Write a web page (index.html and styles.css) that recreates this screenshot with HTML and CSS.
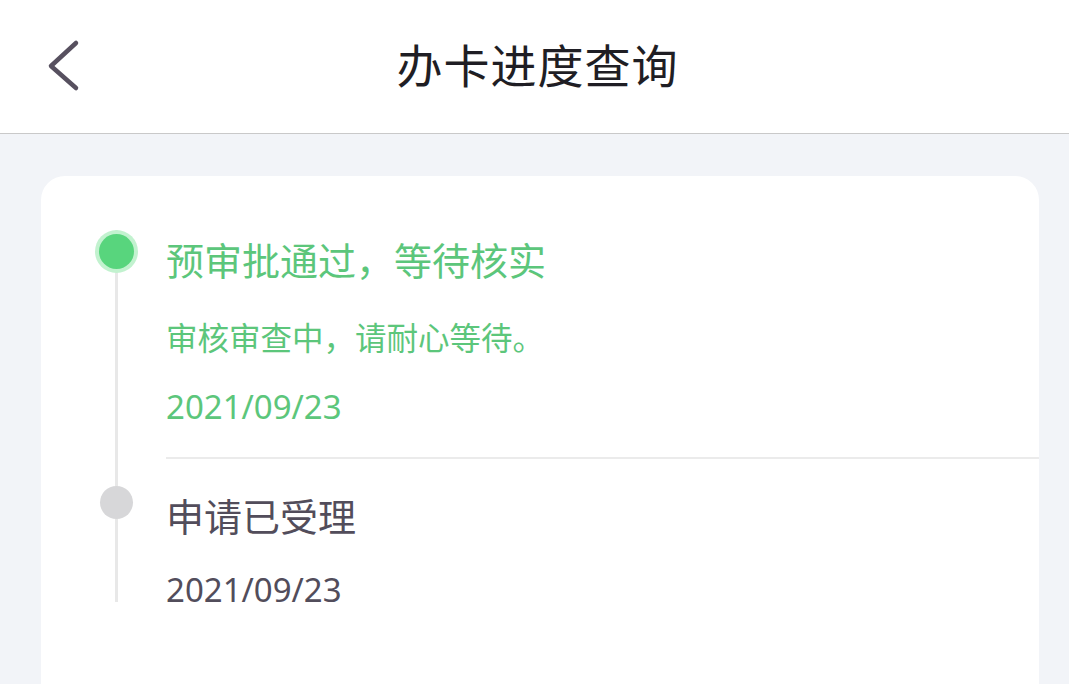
FILE: index.html
```html
<!DOCTYPE html>
<html>

	<head>
		<meta charset="UTF-8">
		<title>办卡进度查询</title>
		<link rel="stylesheet" href="styles.css">
	</head>

	<body>
		<header class="nav">
			<span class="back">
				<svg width="40" height="60" viewBox="0 0 40 60">
					<polyline points="35,8 10,31 35,53" fill="none" stroke="#57505f" stroke-width="4.5" stroke-linecap="round" stroke-linejoin="round" />
				</svg>
			</span>
			<h1>办卡进度查询</h1>
			<span></span>
		</header>

		<div class="main">
			<div class="card">
				<div class="step active">
					<div class="rail">
						<i class="dot"></i>
					</div>
					<div class="info">
						<p class="title">预审批通过，等待核实</p>
						<p class="desc">审核审查中，请耐心等待。</p>
						<p class="date">2021/09/23</p>
					</div>
				</div>
				<div class="step last">
					<div class="rail">
						<i class="dot"></i>
					</div>
					<div class="info">
						<p class="title">申请已受理</p>
						<p class="date">2021/09/23</p>
					</div>
				</div>
			</div>
		</div>
	</body>

</html>
```

FILE: styles.css
```css
* {
	margin: 0;
	padding: 0;
	box-sizing: border-box;
}

html,
body {
	height: 100%;
	overflow: hidden;
}

body {
	background-color: #f2f4f8;
	font-family: "Noto Sans CJK SC", "Noto Sans", sans-serif;
	color: #524d5b;
}

.nav {
	height: 134px;
	background-color: #fff;
	border-bottom: 1px solid #c9c9c9;
	display: grid;
	grid-template-columns: 1fr auto 1fr;
	align-items: center;
}

.nav .back {
	padding-left: 41px;
	padding-bottom: 4px;
	display: flex;
}

.nav h1 {
	font-size: 46px;
	font-weight: 400;
	color: #1f1e24;
	letter-spacing: 1px;
	padding-bottom: 7px;
	padding-left: 6px;
}

.main {
	padding: 42px 30px 0 41px;
}

.card {
	background-color: #fff;
	border-radius: 24px;
	padding-top: 54px;
	min-height: 600px;
}

.step {
	display: grid;
	grid-template-columns: 125px 1fr;
}

.rail {
	background: linear-gradient(#e8e8e8, #e8e8e8) no-repeat 74px 0 / 3px 100%;
}

.dot {
	display: block;
	width: 33px;
	height: 33px;
	border-radius: 50%;
	background-color: #d7d7d9;
	margin-left: 59px;
}

.step.active .dot {
	width: 35px;
	height: 35px;
	margin-top: 4px;
	margin-left: 58px;
	background-color: #58d57d;
	box-shadow: 0 0 0 4px #c2f2cf;
}

.step.last .rail {
	padding-top: 27px;
	background-size: 3px calc(100% - 13px);
}

.info p {
	white-space: nowrap;
}

.title {
	font-size: 38px;
	line-height: 58px;
}

.desc {
	font-size: 31.5px;
	line-height: 50px;
	margin-top: 23px;
}

.date {
	font-family: "Noto Sans", sans-serif;
	font-size: 33px;
	line-height: 50px;
	margin-top: 21px;
}

.step.active .info {
	color: #5cc67b;
	padding-bottom: 25px;
	border-bottom: 2px solid #ebebeb;
}

.step.last .info {
	padding-top: 27px;
}
```
